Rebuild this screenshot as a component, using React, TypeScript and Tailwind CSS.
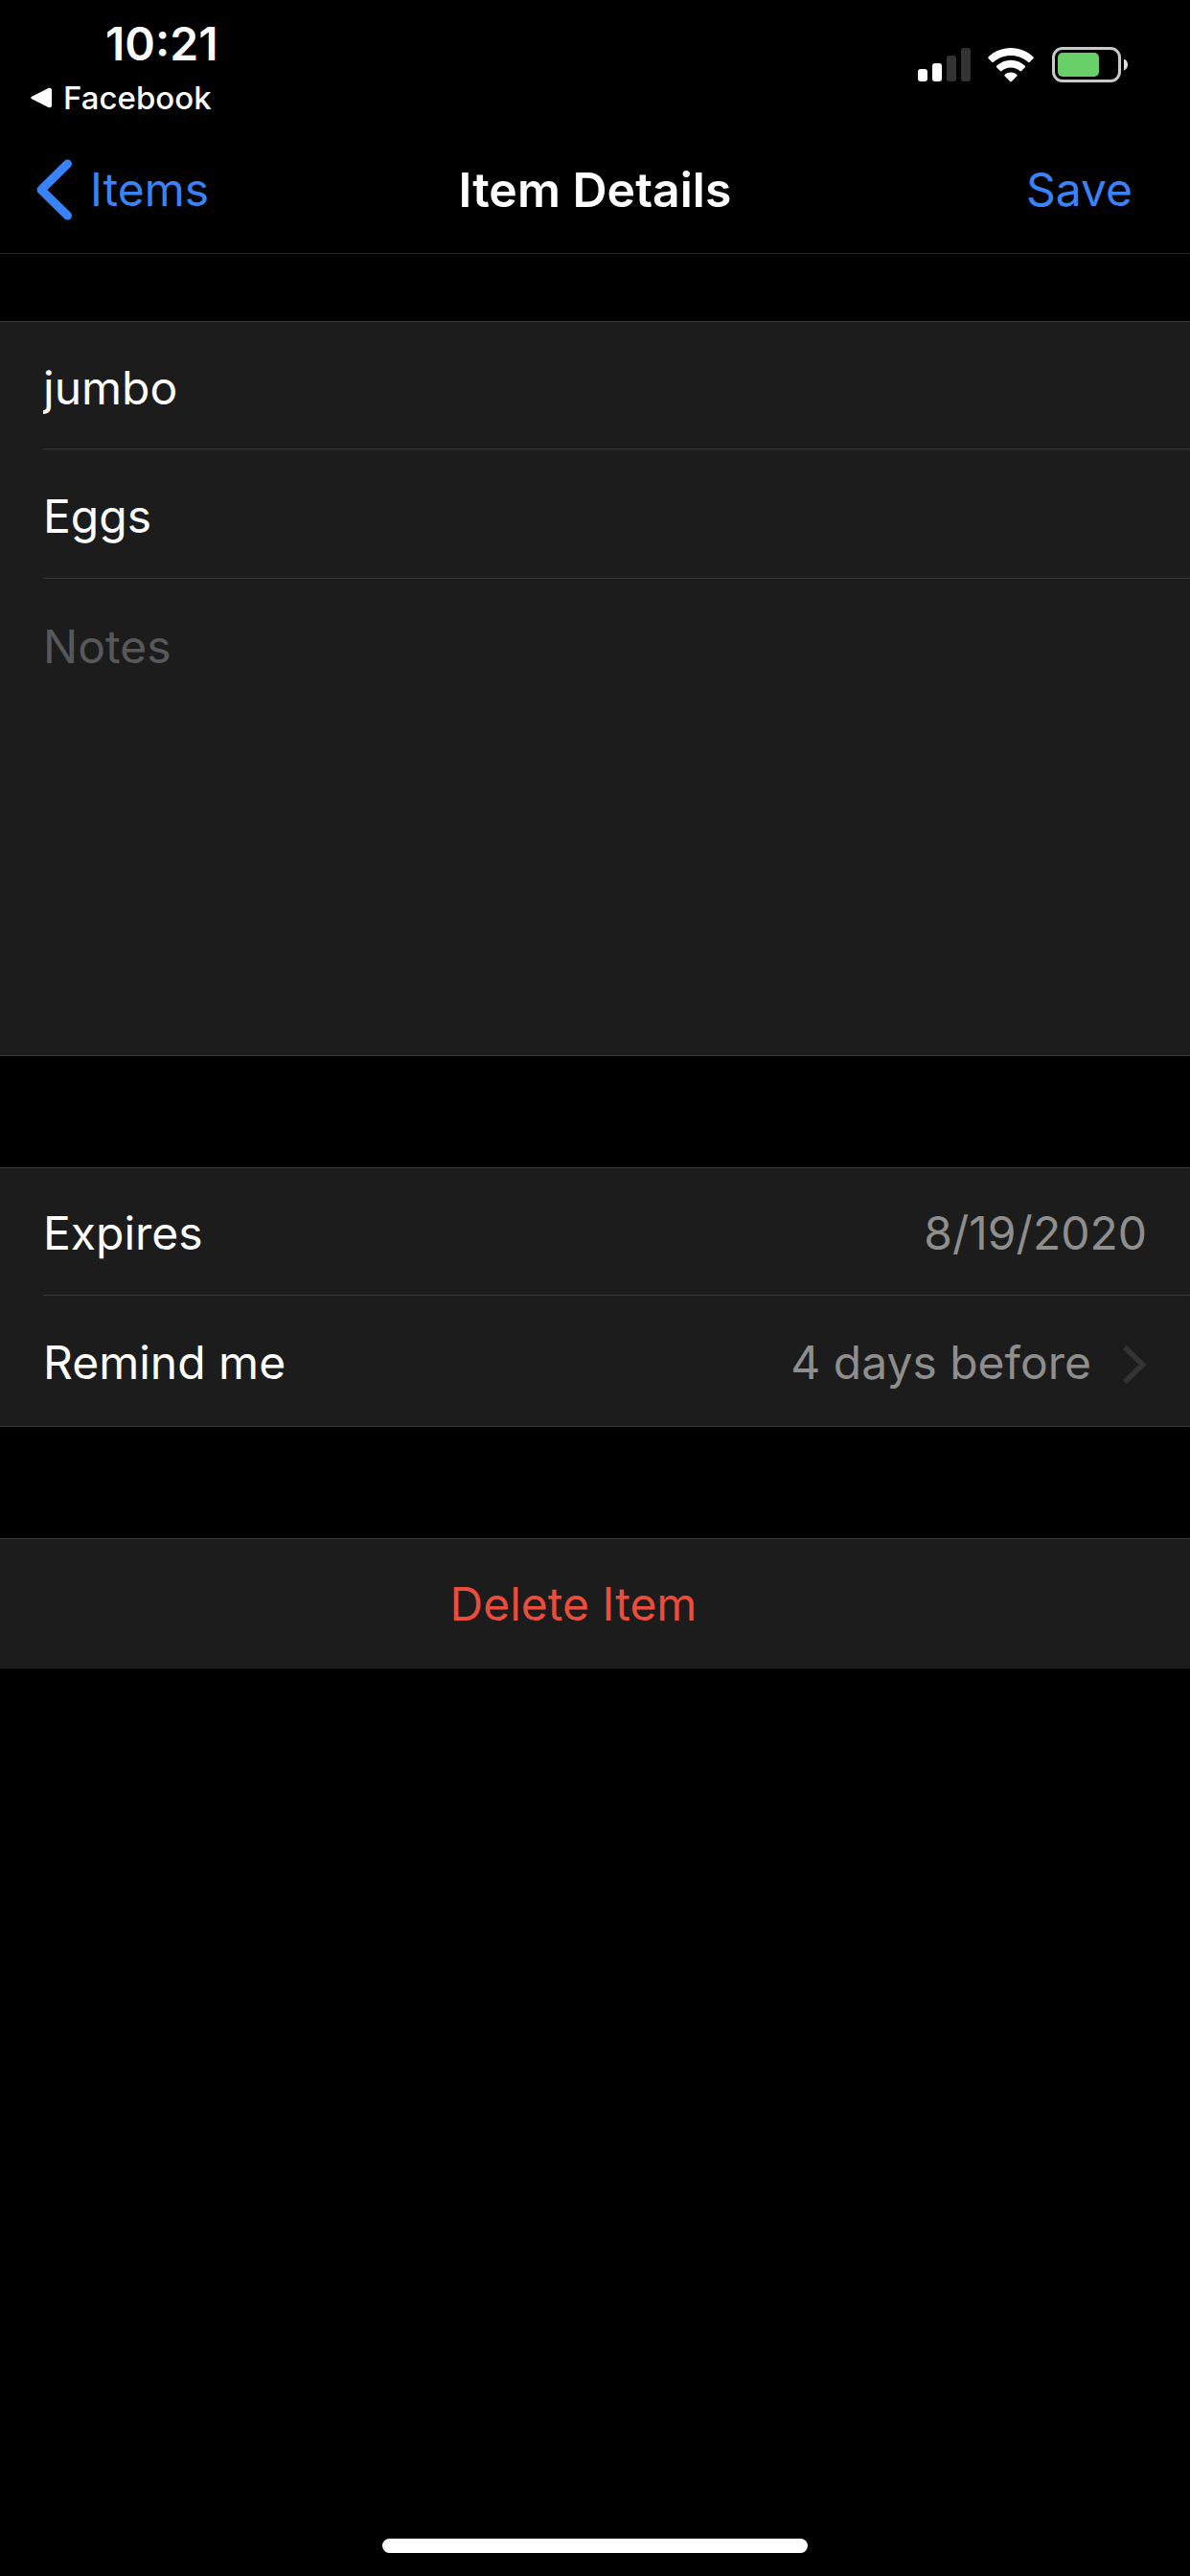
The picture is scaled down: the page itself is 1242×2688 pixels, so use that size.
import type { ReactNode } from "react";

function Signal() {
  return (
    <svg width="55" height="36" viewBox="0 0 55 36" aria-label="Signal: 2 of 4 bars" role="img">
      <rect x="0" y="22" width="10" height="13" rx="3" fill="#fff" />
      <rect x="15" y="16" width="10" height="19" rx="3" fill="#fff" />
      <rect x="30" y="8" width="10" height="27" rx="3" fill="#333" />
      <rect x="45" y="0" width="10" height="35" rx="3" fill="#333" />
    </svg>
  );
}

function Wifi() {
  return (
    <svg width="48" height="36" viewBox="0 0 48 36" aria-label="Wi-Fi" role="img" fill="#fff">
      <path d="M24 0C33 0 41.200 3.500 47.300 9.200C47.900 9.800 47.900 10.400 47.400 10.900L43.700 14.700C43.200 15.200 42.600 15.200 42 14.700C37.200 10.400 30.900 7.900 24 7.900C17.100 7.900 10.800 10.400 6 14.700C5.400 15.200 4.800 15.200 4.300 14.700L.6 10.900C.1 10.400 .1 9.800 .7 9.200C6.800 3.500 15 0 24 0Z" />
      <path d="M24 12.800C29.700 12.800 34.800 15 38.700 18.600C39.300 19.200 39.300 19.800 38.800 20.300L35.100 24C34.600 24.500 34 24.500 33.400 24C30.900 21.800 27.600 20.500 24 20.500C20.400 20.500 17.100 21.800 14.600 24C14 24.500 13.400 24.500 12.900 24L9.200 20.300C8.700 19.800 8.700 19.200 9.300 18.600C13.200 15 18.300 12.800 24 12.800Z" />
      <path d="M24 25.600C26.400 25.600 28.500 26.400 30.200 27.800C30.800 28.300 30.800 28.900 30.300 29.400L24.800 35C24.300 35.500 23.700 35.500 23.200 35L17.700 29.400C17.200 28.900 17.200 28.300 17.800 27.800C19.500 26.400 21.600 25.600 24 25.600Z" />
    </svg>
  );
}

function Battery() {
  return (
    <svg width="80" height="37" viewBox="0 0 80 37" aria-label="Battery" role="img">
      <rect x="1.500" y="1.500" width="69" height="34" rx="9.500" fill="none" stroke="#c9c9c9" strokeWidth="3" />
      <rect x="6" y="6" width="43" height="25" rx="5" fill="#69cf68" />
      <path d="M75 12.500C77.500 13.500 79 15.800 79 18.500C79 21.200 77.500 23.500 75 24.500Z" fill="#dedede" />
    </svg>
  );
}

function Group({ children }: { children: ReactNode }) {
  return <section className="border-y border-[#383839] bg-[#1c1c1c]">{children}</section>;
}

export default function App() {
  return (
    <div className="flex min-h-screen flex-col bg-black font-['Inter','Liberation_Sans',sans-serif] text-[48px] leading-[60px] text-white">
      <div className="flex h-[132px] items-start justify-between pr-[64px] pl-8">
        <div className="flex flex-col pt-4">
          <time className="pl-[78px] font-semibold">10:21</time>
          <button type="button" className="mt-[6px] flex items-center gap-3 text-[33px] leading-[40px] font-medium">
            <svg width="22" height="22" viewBox="0 0 22 22" fill="#fff" aria-hidden="true">
              <path d="M1.200 9.700L18.500 1C20.500 .2 22 1.200 22 3V19C22 20.800 20.500 21.800 18.500 21L1.200 12.300C0 11.700 0 10.300 1.200 9.700Z" />
            </svg>
            Facebook
          </button>
        </div>
        <div className="flex items-center pt-[49px]">
          <Signal />
          <span className="ml-[18px]">
            <Wifi />
          </span>
          <span className="ml-[19px]">
            <Battery />
          </span>
        </div>
      </div>

      <header className="grid h-[133px] grid-cols-[1fr_auto_1fr] items-center border-b border-[#242425] px-[38px]">
        <button type="button" className="flex items-center gap-[18px] justify-self-start text-[#3a82f7]">
          <svg width="38" height="64" viewBox="0 0 38 64" fill="none" aria-hidden="true">
            <path d="M32.500 5L5 32L32.500 59" stroke="currentColor" strokeWidth="9" strokeLinecap="round" strokeLinejoin="round" />
          </svg>
          Items
        </button>
        <h1 className="text-[50px] font-semibold">Item Details</h1>
        <button type="button" className="justify-self-end pr-[22px] text-[#3a82f7]">
          Save
        </button>
      </header>

      <main className="flex flex-col gap-[116px] pt-[70px]">
        <Group>
          <div className="ml-[45px] h-[133px] border-b border-[#383839] pt-1">
            <input aria-label="Description" defaultValue="jumbo" className="h-full w-full bg-transparent outline-none" />
          </div>
          <div className="ml-[45px] h-[135px] border-b border-[#383839] pt-1">
            <input aria-label="Name" defaultValue="Eggs" className="h-full w-full bg-transparent outline-none" />
          </div>
          <textarea
            aria-label="Notes"
            placeholder="Notes"
            className="block h-[497px] w-full resize-none bg-transparent px-[45px] py-[41px] outline-none placeholder:text-[#58585b]"
          />
        </Group>

        <Group>
          <button type="button" className="block w-full pl-[45px] text-left">
            <span className="flex h-[133px] items-center justify-between border-b border-[#383839] pt-1 pr-[45px]">
              <span>Expires</span>
              <span className="text-[#8e8e8e]">8/19/2020</span>
            </span>
          </button>
          <button type="button" className="flex h-[136px] w-full items-center justify-between pt-1 pr-[45px] pl-[45px] text-left">
            <span>Remind me</span>
            <span className="flex items-center gap-8 text-[#8e8e8e]">
              4 days before
              <svg width="26" height="42" viewBox="0 0 26 42" fill="none" className="mt-1" aria-hidden="true">
                <path d="M3 3L21.500 21L3 39" stroke="#343436" strokeWidth="5.500" />
              </svg>
            </span>
          </button>
        </Group>

        <section className="border-t border-[#383839] bg-[#1c1c1c]">
          <button type="button" className="h-[135px] w-full pr-[45px] text-center text-[#eb4d3d]">
            Delete Item
          </button>
        </section>
      </main>

      <div className="mx-auto mt-auto mb-6 h-[15px] w-[444px] rounded-full bg-white" />
    </div>
  );
}
